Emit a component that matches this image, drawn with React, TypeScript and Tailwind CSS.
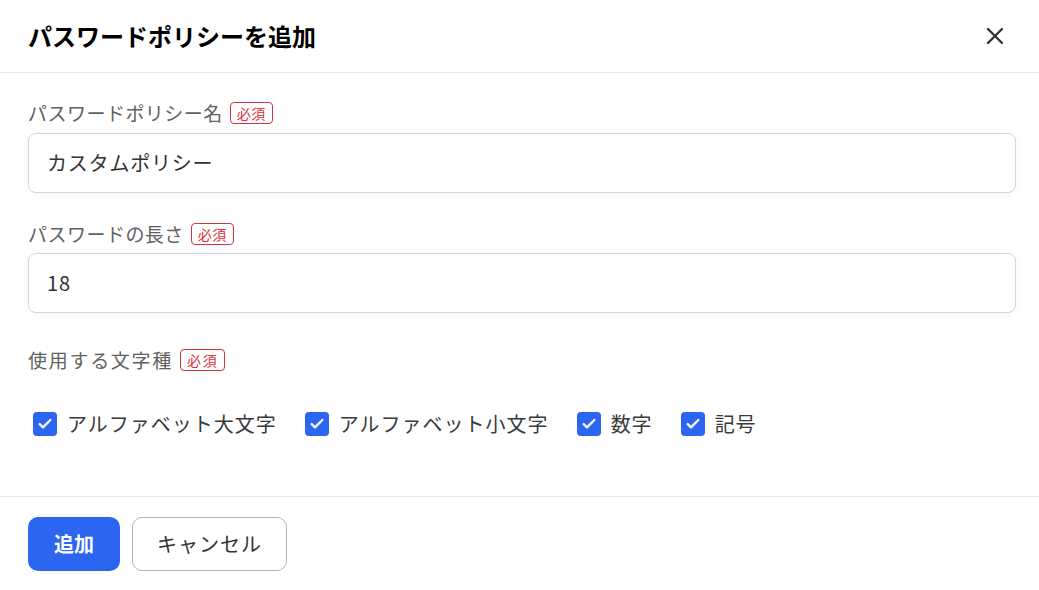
import { X, Check } from 'lucide-react';

const FONT = { fontFamily: '"Noto Sans CJK JP", "Noto Sans", sans-serif' };

function Required() {
  return (
    <span className="inline-flex items-center justify-center h-[22px] px-[6px] border border-[#d9303e] rounded-[4px] text-[14px] leading-none text-[#d9303e]">
      必須
    </span>
  );
}

function FieldLabel({ children, wide }: { children: React.ReactNode; wide?: boolean }) {
  return (
    <div
      className={`flex items-center gap-[7px] h-[24px] text-[19px] text-[#616161] ${
        wide ? 'tracking-[0.09em]' : 'tracking-[0.025em]'
      }`}
    >
      <span>{children}</span>
      <Required />
    </div>
  );
}

function TextInput({ value }: { value: string }) {
  return (
    <div className="h-[60px] rounded-[8px] border border-[#d4d4d4] bg-white shadow-[0_2px_8px_rgba(0,0,0,0.04)] flex items-center px-[18px] text-[20px] tracking-[0.04em] text-[#333]">
      {value}
    </div>
  );
}

function CheckItem({ label }: { label: string }) {
  return (
    <label className="flex items-center gap-[10px]">
      <span className="w-[24px] h-[24px] rounded-[4px] bg-[#2b65f0] flex items-center justify-center">
        <Check size={16} strokeWidth={3.5} className="text-white" />
      </span>
      <span className="text-[20px] tracking-[0.05em] text-[#3a3a3a]">{label}</span>
    </label>
  );
}

export default function App() {
  return (
    <div className="w-[1039px] h-[590px] bg-white flex flex-col" style={FONT}>
      <div className="h-[73px] flex items-center justify-between pl-[28px] pr-[30px] border-b border-[#e6e6e6]">
        <h1 className="text-[24px] font-bold text-black">パスワードポリシーを追加</h1>
        <X size={28} strokeWidth={2} className="text-[#333]" />
      </div>

      <div className="flex-1 px-[28px] pt-[28px] pr-[23px]">
        <FieldLabel>パスワードポリシー名</FieldLabel>
        <div className="mt-[8px]">
          <TextInput value="カスタムポリシー" />
        </div>

        <div className="mt-[29px]">
          <FieldLabel>パスワードの長さ</FieldLabel>
        </div>
        <div className="mt-[7px]">
          <TextInput value="18" />
        </div>

        <div className="mt-[35px]">
          <FieldLabel wide>使用する文字種</FieldLabel>
        </div>

        <div className="mt-[37px] pl-[5px] flex items-center gap-[28px]">
          <CheckItem label="アルファベット大文字" />
          <CheckItem label="アルファベット小文字" />
          <CheckItem label="数字" />
          <CheckItem label="記号" />
        </div>
      </div>

      <div className="h-[94px] border-t border-[#e6e6e6] flex items-start pt-[20px] px-[28px] gap-[12px]">
        <button className="h-[54px] w-[92px] rounded-[10px] bg-[#2b65f0] text-white text-[20px] font-bold">
          追加
        </button>
        <button className="h-[54px] w-[155px] rounded-[10px] border border-[#b5b5b5] bg-white text-[#333] text-[20px] tracking-[0.05em]">
          キャンセル
        </button>
      </div>
    </div>
  );
}
